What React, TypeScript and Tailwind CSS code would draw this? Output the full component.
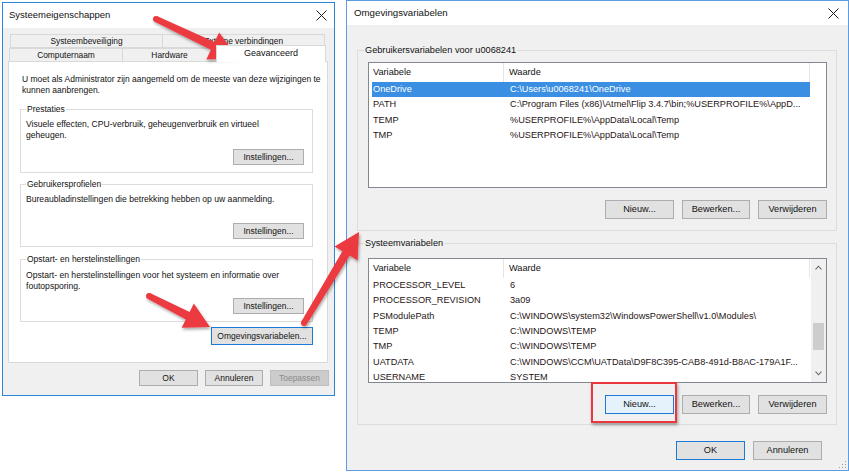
import React from "react";

type Pt = [number, number];

function arrowPoints(tail: Pt, tip: Pt, headLen: number, headW: number, shaftW: number, tailW: number) {
  const dx = tip[0] - tail[0];
  const dy = tip[1] - tail[1];
  const len = Math.hypot(dx, dy);
  const ux = dx / len;
  const uy = dy / len;
  const nx = -uy;
  const ny = ux;
  const bx = tip[0] - ux * headLen;
  const by = tip[1] - uy * headLen;
  const pts: Pt[] = [
    [tail[0] + (nx * tailW) / 2, tail[1] + (ny * tailW) / 2],
    [bx + (nx * shaftW) / 2, by + (ny * shaftW) / 2],
    [bx + (nx * headW) / 2, by + (ny * headW) / 2],
    tip,
    [bx - (nx * headW) / 2, by - (ny * headW) / 2],
    [bx - (nx * shaftW) / 2, by - (ny * shaftW) / 2],
    [tail[0] - (nx * tailW) / 2, tail[1] - (ny * tailW) / 2],
  ];
  return pts.map((p) => `${p[0].toFixed(1)},${p[1].toFixed(1)}`).join(" ");
}

const arrows: { tail: Pt; tip: Pt; hl: number; hw: number }[] = [
  { tail: [156, 19], tip: [238, 58], hl: 28, hw: 30 },
  { tail: [149, 296], tip: [210, 327], hl: 25, hw: 27 },
  { tail: [304, 323], tip: [359, 232], hl: 25, hw: 27 },
];

function CloseX() {
  return (
    <svg width="11" height="11" viewBox="0 0 11 11">
      <path d="M0.5 0.5 L10.5 10.5 M10.5 0.5 L0.5 10.5" stroke="#1a1a1a" strokeWidth="1" />
    </svg>
  );
}

function Btn({
  label,
  w,
  h = 16,
  size = "small",
  variant = "normal",
}: {
  label: string;
  w: number;
  h?: number;
  size?: "small" | "big";
  variant?: "normal" | "focus" | "hover" | "disabled";
}) {
  const cls =
    variant === "disabled"
      ? "bg-[#cccccc] border-[#bfbfbf] text-[#8a8a8a]"
      : variant === "focus"
      ? "bg-[#e1e1e1] border-[#1a7ad6] text-[#111]"
      : variant === "hover"
      ? "bg-[#e5f1fb] border-[#1a7ad6] text-[#111]"
      : "bg-[#e1e1e1] border-[#adadad] text-[#111]";
  const fs = size === "big" ? "text-[9.2px]" : "text-[8.5px]";
  return (
    <div
      className={`flex items-center justify-center border leading-none ${fs} ${cls}`}
      style={{ width: w, height: h }}
    >
      {label}
    </div>
  );
}

function GroupBox({
  legend,
  h,
  mt,
  children,
}: {
  legend: string;
  h: number;
  mt: number;
  children: React.ReactNode;
}) {
  return (
    <div
      className="relative ml-[11px] mr-[14px] border border-[#dcdcdc] flex flex-col"
      style={{ height: h, marginTop: mt }}
    >
      <span className="absolute left-[5px] -top-[6px] bg-white px-[1px] text-[8.5px] leading-[11px] text-[#111]">
        {legend}
      </span>
      {children}
    </div>
  );
}

function Tab({ label, w, selected = false }: { label: string; w: number; selected?: boolean }) {
  return (
    <div
      className={
        selected
          ? "relative z-10 -mt-[2px] h-[17px] bg-white border border-b-0 border-[#d9d9d9] flex items-center justify-center text-[9px] text-[#111]"
          : "h-[14px] bg-[#f0f0f0] border border-[#d9d9d9] -ml-px first:ml-0 flex items-center justify-center text-[8.4px] text-[#111]"
      }
      style={{ width: w }}
    >
      {label}
    </div>
  );
}

type Row = { name: string; value: string; sel?: boolean };

function ListView({ rows, h, scroll = false }: { rows: Row[]; h: number; scroll?: boolean }) {
  return (
    <div className="relative bg-white border border-[#828790] flex overflow-hidden" style={{ height: h }}>
      <div className="flex-1 flex flex-col min-w-0">
        <div className="h-[19px] flex items-stretch text-[9.2px] text-[#111] shrink-0">
          <div className="w-[135px] pl-[4px] flex items-center border-r border-[#e5e5e5]">Variabele</div>
          <div className="w-[306px] pl-[5px] flex items-center border-r border-[#e5e5e5]">Waarde</div>
        </div>
        <div className="flex flex-col">
          {rows.map((r) => (
            <div
              key={r.name}
              className={`ml-[3px] w-[438px] h-[15.4px] flex items-center text-[9.2px] whitespace-nowrap shrink-0 ${
                r.sel ? "bg-[#3b8fe3] text-white" : "text-[#1f1515]"
              }`}
            >
              <div className="w-[132px] pl-[1px]">{r.name}</div>
              <div className="pl-[6px]">{r.value}</div>
            </div>
          ))}
        </div>
      </div>
      {scroll && (
        <div className="w-[15px] bg-[#f0f0f0] flex flex-col items-center shrink-0">
          <div className="h-[17px] flex items-center justify-center">
            <svg width="7" height="5" viewBox="0 0 7 5">
              <path d="M0.5 4.5 L3.5 1.2 L6.5 4.5" stroke="#606060" fill="none" strokeWidth="1.1" />
            </svg>
          </div>
          <div className="flex-1 w-full flex flex-col">
            <div className="h-[47px]" />
            <div className="h-[27px] mx-[2px] bg-[#cdcdcd]" />
          </div>
          <div className="h-[17px] flex items-center justify-center">
            <svg width="7" height="5" viewBox="0 0 7 5">
              <path d="M0.5 0.5 L3.5 3.8 L6.5 0.5" stroke="#606060" fill="none" strokeWidth="1.1" />
            </svg>
          </div>
        </div>
      )}
    </div>
  );
}

const userRows: Row[] = [
  { name: "OneDrive", value: "C:\\Users\\u0068241\\OneDrive", sel: true },
  { name: "PATH", value: "C:\\Program Files (x86)\\Atmel\\Flip 3.4.7\\bin;%USERPROFILE%\\AppD..." },
  { name: "TEMP", value: "%USERPROFILE%\\AppData\\Local\\Temp" },
  { name: "TMP", value: "%USERPROFILE%\\AppData\\Local\\Temp" },
];

const sysRows: Row[] = [
  { name: "PROCESSOR_LEVEL", value: "6" },
  { name: "PROCESSOR_REVISION", value: "3a09" },
  { name: "PSModulePath", value: "C:\\WINDOWS\\system32\\WindowsPowerShell\\v1.0\\Modules\\" },
  { name: "TEMP", value: "C:\\WINDOWS\\TEMP" },
  { name: "TMP", value: "C:\\WINDOWS\\TEMP" },
  { name: "UATDATA", value: "C:\\WINDOWS\\CCM\\UATData\\D9F8C395-CAB8-491d-B8AC-179A1F..." },
  { name: "USERNAME", value: "SYSTEM" },
];

export default function App() {
  return (
    <div className="relative w-[849px] h-[473px] bg-white overflow-hidden font-['Liberation_Sans',Arial,sans-serif] text-[#111]">
      {/* Left dialog: Systeemeigenschappen */}
      <div className="absolute left-[2px] top-[2px] w-[333px] h-[394px] border border-[#2b86d9] bg-[#f0f0f0] flex flex-col">
        <div className="h-[25px] bg-white flex items-center justify-between pl-[6px] pr-[7px] shrink-0">
          <span className="text-[9.5px]">Systeemeigenschappen</span>
          <CloseX />
        </div>
        <div className="flex-1 flex flex-col pt-[6px] pl-[5px] pr-[6px]">
          <div className="flex ml-[2px]">
            <Tab label="Systeembeveiliging" w={153} />
            <Tab label="Externe verbindingen" w={163} />
          </div>
          <div className="flex ml-[1px] h-[14px] items-end">
            <Tab label="Computernaam" w={114} />
            <Tab label="Hardware" w={95} />
            <div className="-ml-px">
              <Tab label="Geavanceerd" w={110} selected />
            </div>
          </div>
          <div className="-mt-px h-[302px] bg-white border border-[#d9d9d9] flex flex-col">
            <div className="pt-[12px] pl-[13px] text-[8.5px] leading-[11px] whitespace-nowrap">
              U moet als Administrator zijn aangemeld om de meeste van deze wijzigingen te
              <br />
              kunnen aanbrengen.
            </div>
            <GroupBox legend="Prestaties" h={64} mt={13}>
              <div className="pt-[9px] pl-[5px] text-[8.6px] leading-[11px] whitespace-nowrap">
                Visuele effecten, CPU-verbruik, geheugenverbruik en virtueel
                <br />
                geheugen.
              </div>
              <div className="mt-auto self-end mr-[8px] mb-[7px]">
                <Btn label="Instellingen..." w={71} />
              </div>
            </GroupBox>
            <GroupBox legend="Gebruikersprofielen" h={63} mt={11}>
              <div className="pt-[9px] pl-[5px] text-[8.6px] leading-[11px] whitespace-nowrap">
                Bureaubladinstellingen die betrekking hebben op uw aanmelding.
              </div>
              <div className="mt-auto self-end mr-[8px] mb-[7px]">
                <Btn label="Instellingen..." w={71} />
              </div>
            </GroupBox>
            <GroupBox legend="Opstart- en herstelinstellingen" h={63} mt={12}>
              <div className="pt-[10px] pl-[5px] text-[8.6px] leading-[11px] whitespace-nowrap">
                Opstart- en herstelinstellingen voor het systeem en informatie over
                <br />
                foutopsporing.
              </div>
              <div className="mt-auto self-end mr-[8px] mb-[7px]">
                <Btn label="Instellingen..." w={71} />
              </div>
            </GroupBox>
            <div className="mt-[5px] self-end mr-[14px]">
              <Btn label="Omgevingsvariabelen..." w={102} h={18} variant="focus" />
            </div>
          </div>
          <div className="mt-[7px] -mr-[1px] flex justify-end gap-[7px]">
            <Btn label="OK" w={59} />
            <Btn label="Annuleren" w={58} />
            <Btn label="Toepassen" w={59} variant="disabled" />
          </div>
        </div>
      </div>

      {/* Right dialog: Omgevingsvariabelen */}
      <div className="absolute left-[346px] top-0 w-[503px] h-[471px] border border-[#5a9de2] bg-[#f0f0f0] flex flex-col">
        <div className="h-[24px] bg-white flex items-center justify-between pl-[7px] pr-[9px] shrink-0">
          <span className="text-[9.7px]">Omgevingsvariabelen</span>
          <CloseX />
        </div>
        <div className="flex-1 flex flex-col pl-[10px] pr-[11px]">
          <div className="relative mt-[25px] h-[181px] border border-[#dcdcdc] flex flex-col pt-[11px] pl-[10px] pr-[9px]">
            <span className="absolute left-[6px] -top-[6px] bg-[#f0f0f0] px-[1px] text-[9.2px] leading-[11px]">
              Gebruikersvariabelen voor u0068241
            </span>
            <ListView rows={userRows} h={126} />
            <div className="mt-[12px] flex justify-end gap-[8px]">
              <Btn label="Nieuw..." w={69} h={19} size="big" />
              <Btn label="Bewerken..." w={68} h={19} size="big" />
              <Btn label="Verwijderen" w={69} h={19} size="big" />
            </div>
          </div>
          <div className="relative mt-[12px] h-[182px] border border-[#dcdcdc] flex flex-col pt-[14px] pl-[10px] pr-[9px]">
            <span className="absolute left-[6px] -top-[6px] bg-[#f0f0f0] px-[1px] text-[9.2px] leading-[11px]">
              Systeemvariabelen
            </span>
            <ListView rows={sysRows} h={125} scroll />
            <div className="mt-[12px] flex justify-end gap-[8px]">
              <Btn label="Nieuw..." w={69} h={19} size="big" variant="hover" />
              <Btn label="Bewerken..." w={68} h={19} size="big" />
              <Btn label="Verwijderen" w={69} h={19} size="big" />
            </div>
          </div>
          <div className="mt-[16px] mr-[15px] flex justify-end gap-[8px]">
            <Btn label="OK" w={69} h={19} size="big" variant="focus" />
            <Btn label="Annuleren" w={69} h={19} size="big" />
          </div>
          <div className="mt-auto self-end -mr-[10px] mb-[1px]">
            <svg width="8" height="8" viewBox="0 0 8 8">
              <rect x="6" y="0" width="1" height="1" fill="#9a9a9a" />
              <rect x="3" y="3" width="1" height="1" fill="#9a9a9a" />
              <rect x="6" y="3" width="1" height="1" fill="#9a9a9a" />
              <rect x="0" y="6" width="1" height="1" fill="#9a9a9a" />
              <rect x="3" y="6" width="1" height="1" fill="#9a9a9a" />
              <rect x="6" y="6" width="1" height="1" fill="#9a9a9a" />
            </svg>
          </div>
        </div>
      </div>

      {/* Red highlight box */}
      <div className="absolute left-[591px] top-[382px] w-[86px] h-[41px] border-2 border-[#e8373d] shadow-[1px_2px_3px_rgba(0,0,0,0.35)]" />

      {/* Arrows */}
      <svg className="absolute left-0 top-0 pointer-events-none" width="849" height="473" viewBox="0 0 849 473">
        <defs>
          <filter id="sh" x="-20%" y="-20%" width="140%" height="140%">
            <feDropShadow dx="1" dy="2" stdDeviation="1.6" floodColor="#000" floodOpacity="0.35" />
          </filter>
        </defs>
        {arrows.map((a, i) => (
          <g key={i} filter="url(#sh)" fill="#eb3a3f">
            <polygon points={arrowPoints(a.tail, a.tip, a.hl, a.hw, 8.5, 6)} />
            <circle cx={a.tail[0]} cy={a.tail[1]} r={3} />
          </g>
        ))}
      </svg>
    </div>
  );
}
